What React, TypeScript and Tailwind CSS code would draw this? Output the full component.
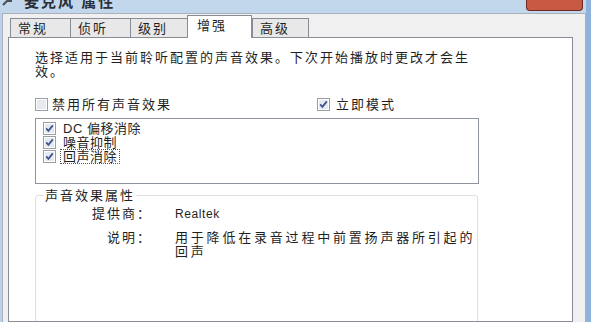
import React from 'react';

const FONT = "font-['Liberation_Sans','Noto_Sans_CJK_SC',sans-serif]";

// Windows 7 style checkbox
function Check({ checked }: { checked: boolean }) {
  return (
    <svg width="13" height="13" viewBox="0 0 13 13" className="shrink-0">
      <rect x="0.5" y="0.5" width="12" height="12" fill="#fff" stroke="#9a9fa6" />
      <rect x="2" y="2" width="9" height="9" fill="#e6eaf0" />
      {checked && (
        <path d="M3.2 6.4 L5.4 8.8 L9.8 3.4" fill="none" stroke="#3c5590" strokeWidth="1.8" />
      )}
    </svg>
  );
}

const tabs = [
  { label: '常规', w: 'w-[61px]' },
  { label: '侦听', w: 'w-[61px]' },
  { label: '级别', w: 'w-[58px]' },
  { label: '增强', w: 'w-[65px]', active: true },
  { label: '高级', w: 'w-[57px]' },
];

const effects = ['DC 偏移消除', '噪音抑制', '回声消除'];

export default function App() {
  return (
    <div className={`w-[591px] h-[322px] overflow-hidden flex bg-[#bcd2ea] text-[#1f1f1f] ${FONT}`}>
      <div className="flex-1 flex flex-col">
        {/* title bar, cut off at the top */}
        <div className="h-[13px] shrink-0 flex items-end bg-[#c2d6ec]">
          <svg width="12" height="8" viewBox="0 0 12 8" className="ml-[2px] mb-[6px]">
            <path d="M1 6 L5 2 L10 2" stroke="#4a5058" strokeWidth="2" fill="none" />
          </svg>
          <div className="ml-[10px] h-[13px] overflow-hidden flex items-end">
            <span className="mb-[4px] text-[15px] leading-[15px] tracking-[2px] font-bold text-[#2a2f38]">
              麦克风 属性
            </span>
          </div>
          <div className="ml-auto mr-[3px] self-start w-[57px] h-[11px] rounded-b-[4px] border border-t-0 border-[#6e2a22] bg-[#c85a44]" />
        </div>

        {/* dialog body */}
        <div className="flex-1 ml-[2px] bg-[#f0f0f0] border-t border-l border-r border-[#a9b2bc] pl-[5px] pr-[12px] pt-px flex flex-col min-h-0">
          {/* tabs */}
          <div className="h-[22px] shrink-0 flex items-end pl-[2px] relative z-10">
            {tabs.map((t) =>
              t.active ? (
                <div
                  key={t.label}
                  className={`${t.w} h-[23px] -mb-px bg-white border border-b-0 border-[#898c95] pl-[9px] pt-[2px] text-[13px] leading-[16px] tracking-[2px]`}
                >
                  {t.label}
                </div>
              ) : (
                <div
                  key={t.label}
                  className={`${t.w} h-[19px] -mr-px bg-[#e8e8e8] border border-b-0 border-[#898c95] pl-[7px] pt-[2px] text-[13px] leading-[16px] tracking-[2px]`}
                >
                  {t.label}
                </div>
              )
            )}
          </div>

          {/* tab panel */}
          <div className="flex-1 min-h-0 overflow-hidden bg-white border border-[#898c95] pl-[26px] pt-[13px]">
            <p className="text-[13px] leading-[14px] tracking-[2px] whitespace-nowrap">
              选择适用于当前聆听配置的声音效果。下次开始播放时更改才会生
              <br />
              效。
            </p>

            <div className="mt-[19px] flex items-center h-[13px]">
              <div className="w-[282px] flex items-center gap-[4px]">
                <Check checked={false} />
                <span className="text-[13px] leading-[13px] tracking-[2px]">禁用所有声音效果</span>
              </div>
              <div className="flex items-center gap-[6px]">
                <Check checked />
                <span className="text-[13px] leading-[13px] tracking-[2px]">立即模式</span>
              </div>
            </div>

            <div className="mt-[7px] w-[444px] h-[66px] border border-[#8e949c] pl-[7px] pt-[2px]">
              {effects.map((e, i) => (
                <div key={e} className="h-[14px] flex items-center">
                  <Check checked />
                  {i === 2 ? (
                    <span className="ml-[5px] px-[2px] text-[13px] leading-[13px] tracking-[0.5px] outline outline-1 outline-dotted outline-[#555]">
                      {e}
                    </span>
                  ) : (
                    <span className="ml-[7px] text-[13px] leading-[13px] tracking-[0.5px]">{e}</span>
                  )}
                </div>
              ))}
            </div>

            <fieldset className="mt-[5px] w-[443px] h-[200px] border border-[#d9dfe4] rounded-[3px]">
              <legend className="ml-[8px] px-[1px] text-[13px] leading-[13px] tracking-[2px]">声音效果属性</legend>
              <div className="pt-[5px] grid grid-cols-[116px_1fr] gap-x-[23px] gap-y-[10px] text-[13px] leading-[14px]">
                <div className="text-right tracking-[2px]">提供商：</div>
                <div className="text-[12px] tracking-[0.6px]">Realtek</div>
                <div className="text-right tracking-[2px]">说明：</div>
                <div className="tracking-[2.8px] whitespace-nowrap">
                  用于降低在录音过程中前置扬声器所引起的
                  <br />
                  回声
                </div>
              </div>
            </fieldset>
          </div>
        </div>
      </div>
      {/* right window frame */}
      <div className="w-[5px] shrink-0 bg-[#8fb2dc]" />
    </div>
  );
}
